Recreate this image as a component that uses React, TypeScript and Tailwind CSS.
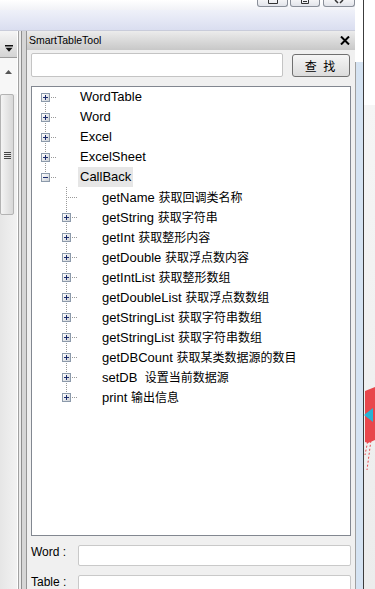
import React from 'react';

const dotV =
  'bg-[image:repeating-linear-gradient(to_bottom,#9a9a9a_0px,#9a9a9a_1px,transparent_1px,transparent_2px)]';
const dotH =
  'bg-[image:repeating-linear-gradient(to_right,#9a9a9a_0px,#9a9a9a_1px,transparent_1px,transparent_2px)]';

type VKind = 'first' | 'mid' | 'last';

function ExpBox({ pos, minus }: { pos: string; minus?: boolean }) {
  return (
    <span
      className={`absolute top-[6px] h-[9px] w-[9px] border border-[#8c9aab] bg-gradient-to-br from-white to-[#cdd1d6] ${pos}`}
    >
      <span className="absolute left-[1px] top-[3px] h-px w-[5px] bg-[#1c2c6c]" />
      {!minus && <span className="absolute left-[3px] top-[1px] h-[5px] w-px bg-[#1c2c6c]" />}
    </span>
  );
}

function Row({
  root,
  v,
  box,
  minus,
  label,
  zh,
  selected,
}: {
  root: boolean;
  v: VKind;
  box: boolean;
  minus?: boolean;
  label: string;
  zh?: string;
  selected?: boolean;
}) {
  const vPos =
    v === 'first' ? 'top-[10px] h-[10px]' : v === 'last' ? 'top-0 h-[10px]' : 'top-0 h-[20px]';
  return (
    <div className={`relative flex h-[20px] items-center ${root ? 'pl-[46px]' : 'pl-[68px]'}`}>
      <span className={`absolute w-px ${dotV} ${vPos} ${root ? 'left-[13px]' : 'left-[34px]'}`} />
      <span
        className={`absolute top-[10px] h-px ${dotH} ${root ? 'left-[13px] w-[12px]' : 'left-[34px] w-[11px]'}`}
      />
      {box && <ExpBox pos={root ? 'left-[9px]' : 'left-[30px]'} minus={minus} />}
      <span
        className={`h-[20px] whitespace-pre px-[2px] text-[13px] leading-[20px] text-black ${
          selected ? 'bg-[#e6e6e6]' : ''
        }`}
      >
        {label}
        {zh && (
          <span className="font-['Noto_Sans_CJK_SC',sans-serif] text-[12px] leading-[20px]">{zh}</span>
        )}
      </span>
    </div>
  );
}

const roots = ['WordTable', 'Word', 'Excel', 'ExcelSheet', 'CallBack'];
const children: { en: string; zh: string; box: boolean }[] = [
  { en: 'getName ', zh: '获取回调类名称', box: false },
  { en: 'getString ', zh: '获取字符串', box: true },
  { en: 'getInt ', zh: '获取整形内容', box: true },
  { en: 'getDouble ', zh: '获取浮点数内容', box: true },
  { en: 'getIntList ', zh: '获取整形数组', box: true },
  { en: 'getDoubleList ', zh: '获取浮点数数组', box: true },
  { en: 'getStringList ', zh: '获取字符串数组', box: true },
  { en: 'getStringList ', zh: '获取字符串数组', box: true },
  { en: 'getDBCount ', zh: '获取某类数据源的数目', box: true },
  { en: 'setDB  ', zh: '设置当前数据源', box: true },
  { en: 'print ', zh: '输出信息', box: true },
];

function WinButton({ w, kind }: { w: string; kind: 'max' | 'restore' | 'close' }) {
  return (
    <div
      className={`flex h-[7px] justify-center rounded-b-[3px] border border-t-0 border-[#8a8f99] bg-gradient-to-b from-[#f4f4f6] to-[#e2e4ea] ${w}`}
    >
      <svg width="14" height="5" viewBox="0 0 14 5">
        {kind === 'max' && <path d="M2.5 0 V3.5 H11.5 V0" fill="none" stroke="#333" strokeWidth="1" />}
        {kind === 'restore' && (
          <>
            <path d="M3.5 0 V3.5 H10.5 V0" fill="none" stroke="#333" strokeWidth="1" />
            <path d="M5 1.5 H9" stroke="#333" strokeWidth="1" />
          </>
        )}
        {kind === 'close' && <path d="M3 0 L6 3 M11 0 L8 3" stroke="#333" strokeWidth="1.5" />}
      </svg>
    </div>
  );
}

export default function App() {
  return (
    <div className="flex h-[589px] w-[375px] overflow-hidden bg-white font-['Liberation_Sans','Noto_Sans_CJK_SC',sans-serif]">
      {/* main left part 0-355 */}
      <div className="flex h-[589px] w-[355px] shrink-0 flex-col overflow-hidden">
        <div className="flex h-[10px] shrink-0 justify-end bg-gradient-to-b from-white to-[#f1f2f7]">
          <WinButton w="w-[31px]" kind="max" />
          <div className="ml-[2px]">
            <WinButton w="w-[30px]" kind="restore" />
          </div>
          <div className="ml-[3px]">
            <WinButton w="w-[32px]" kind="close" />
          </div>
        </div>
        <div className="h-[21px] shrink-0 border-b border-[#c9ccda] bg-gradient-to-b from-[#eff1f9] to-[#dadef0]" />
        <div className="flex min-h-0 flex-1 overflow-hidden">
          {/* left scroll widget */}
          <div className="flex w-[17px] shrink-0 flex-col bg-gradient-to-r from-[#e6e6e6] to-[#f2f2f2]">
            <div className="flex h-[27px] shrink-0 items-center justify-center border-b border-[#9c9c9c] bg-gradient-to-b from-[#f6f6f6] to-[#d4d4d4] pt-[8px]">
              <svg width="8" height="7" viewBox="0 0 8 7">
                <rect x="0" y="0" width="8" height="1.5" fill="#111" />
                <path d="M0.5 2.8 H7.5 L4 6.8 Z" fill="#111" />
              </svg>
            </div>
            <div className="flex h-[36px] shrink-0 justify-center bg-[#f7f7f7] pt-[12px]">
              <svg width="7" height="4" viewBox="0 0 7 4">
                <path d="M0 4 L3.5 0 L7 4 Z" fill="#555" />
              </svg>
            </div>
            <div className="flex h-[121px] w-[14px] shrink-0 flex-col items-center justify-center rounded-[2px] border border-[#b3b3b3] bg-gradient-to-r from-[#f4f4f4] to-[#d8d8d8]">
              <div className="mt-[2px] flex flex-col gap-[1px]">
                <span className="h-px w-[7px] bg-[#444]" />
                <span className="h-px w-[7px] bg-[#444]" />
                <span className="h-px w-[7px] bg-[#444]" />
                <span className="h-px w-[7px] bg-[#444]" />
              </div>
            </div>
          </div>
          {/* frame lines */}
          <div className="w-px shrink-0 bg-white" />
          <div className="w-px shrink-0 bg-[#a2a2a2]" />
          <div className="w-[2px] shrink-0 bg-[#ececec]" />
          <div className="w-px shrink-0 bg-[#8e8e8e]" />
          <div className="w-[4px] shrink-0 bg-[#d6d6d6]" />
          <div className="w-px shrink-0 bg-[#959595]" />
          {/* panel */}
          <div className="flex min-w-0 flex-1 flex-col bg-[#f0f0f0]">
            <div className="flex h-[19px] shrink-0 items-center justify-between bg-gradient-to-b from-[#ececec] to-[#c8c8c8] pl-[2px] pr-[5px]">
              <span className="text-[10.5px] leading-[19px] text-black">SmartTableTool</span>
              <svg width="10" height="9" viewBox="0 0 10 9">
                <path d="M1 0.5 L9 8.5 M9 0.5 L1 8.5" stroke="#000" strokeWidth="2" />
              </svg>
            </div>
            <div className="flex shrink-0 flex-col px-[4px] pt-[3px]">
              <div className="flex shrink-0 items-start pr-[1px]">
                <div className="h-[24px] w-[252px] rounded-[2px] border border-[#c4c4c4] bg-white" />
                <button className="ml-[9px] mt-[1px] flex h-[23px] w-[58px] items-center justify-center rounded-[3px] border border-[#707070] bg-gradient-to-b from-[#f6f6f6] to-[#dcdcdc] font-['Noto_Sans_CJK_SC',sans-serif] text-[12px] leading-[23px] tracking-[2px] text-black">
                  查 找
                </button>
              </div>
              <div className="mt-[9px] h-[450px] w-[320px] shrink-0 border border-[#828790] bg-white">
                {roots.map((r, i) => (
                  <Row
                    key={r}
                    root
                    v={i === 0 ? 'first' : i === roots.length - 1 ? 'last' : 'mid'}
                    box
                    minus={r === 'CallBack'}
                    label={r}
                    selected={r === 'CallBack'}
                  />
                ))}
                {children.map((c, i) => (
                  <Row
                    key={i}
                    root={false}
                    v={i === children.length - 1 ? 'last' : 'mid'}
                    box={c.box}
                    label={c.en}
                    zh={c.zh}
                  />
                ))}
              </div>
              <div className="mt-[9px] flex shrink-0 items-start">
                <span className="w-[47px] text-[12px] leading-[14px] text-black">Word :</span>
                <div className="h-[21px] w-[273px] rounded-[2px] border border-[#c9c9c9] bg-white" />
              </div>
              <div className="mt-[9px] flex shrink-0 items-start">
                <span className="w-[47px] text-[12px] leading-[14px] text-black">Table :</span>
                <div className="h-[21px] w-[273px] rounded-[2px] border border-[#c9c9c9] bg-white" />
              </div>
            </div>
          </div>
        </div>
      </div>
      {/* right strip */}
      <div className="flex w-[8px] shrink-0 flex-col">
        <div className="h-[62px] shrink-0 bg-white" />
        <div className="flex-1 border-l border-[#a0a0a0] bg-[#d5e3f2]" />
      </div>
      <div className="w-px shrink-0 bg-[#3c3c3c]" />
      <div className="flex w-[11px] shrink-0 flex-col">
        <div className="h-[105px] shrink-0 bg-white" />
        <div className="flex-1 bg-gradient-to-b from-[#f5f5f5] to-[#ececec] pt-[280px]">
          <svg width="11" height="90" viewBox="0 0 11 90">
            <path d="M1 6 L11 2 L11 55 L4 58 L1 57 Z" fill="#e8474c" />
            <path d="M0 30 L9 23 L9 37 Z" fill="#27b3d4" />
            <path d="M9 40 L3 85" stroke="#e8474c" strokeWidth="1" strokeDasharray="2 2" />
            <path d="M6 45 L1 70" stroke="#e8474c" strokeWidth="1" strokeDasharray="2 2" />
          </svg>
        </div>
      </div>
    </div>
  );
}
